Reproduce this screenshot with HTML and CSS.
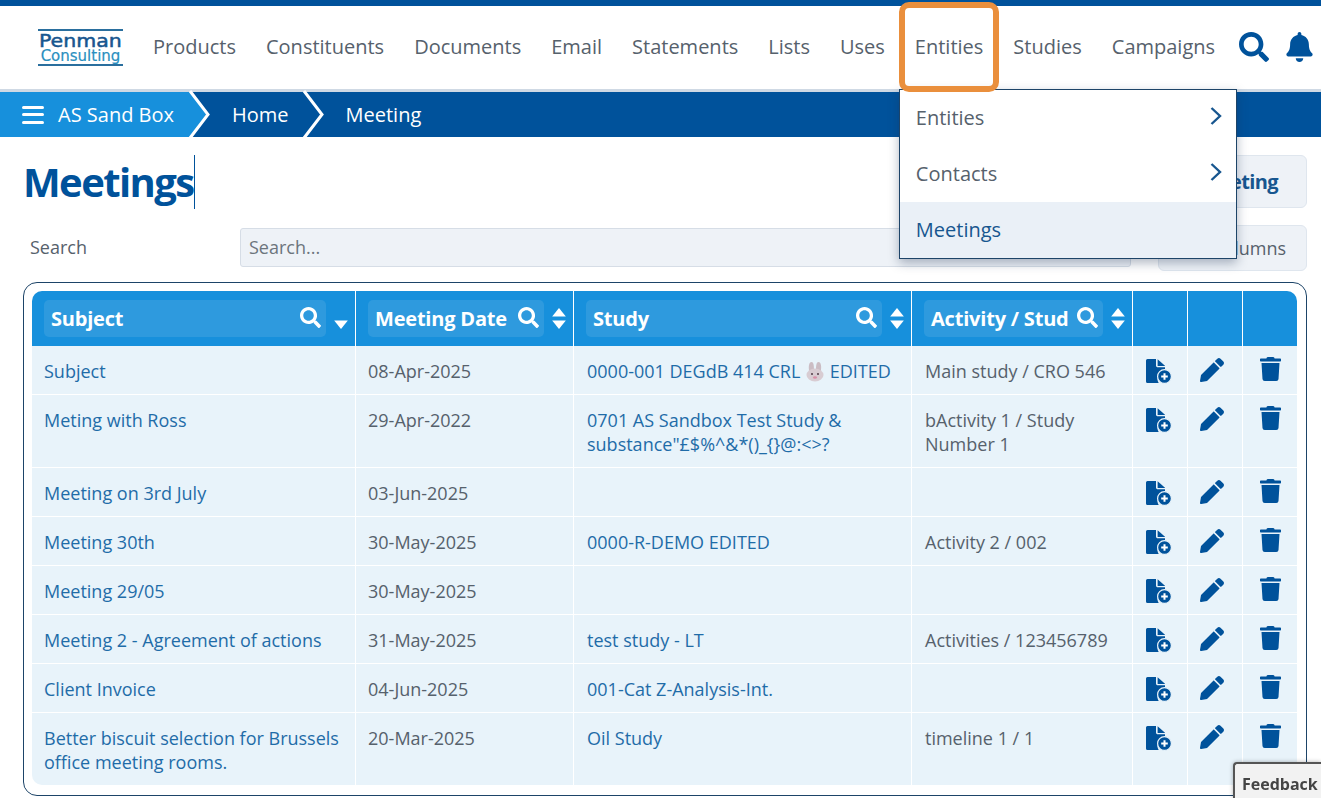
FILE: index.html
```html
<!DOCTYPE html>
<html lang="en">
<head>
<meta charset="utf-8">
<title>Meetings</title>
<link rel="stylesheet" href="styles.css">
</head>
<body>
<svg class="defs" width="0" height="0" aria-hidden="true">
  <symbol id="i-search" viewBox="0 0 512 512"><path d="M505 442.7L405.3 343c-4.5-4.5-10.6-7-17-7H372c27.6-35.3 44-79.7 44-128C416 93.1 322.9 0 208 0S0 93.1 0 208s93.1 208 208 208c48.3 0 92.7-16.4 128-44v16.3c0 6.4 2.5 12.5 7 17l99.7 99.7c9.4 9.4 24.6 9.4 33.9 0l28.3-28.3c9.4-9.4 9.4-24.6.1-34zM208 336c-70.7 0-128-57.2-128-128 0-70.7 57.2-128 128-128 70.7 0 128 57.2 128 128 0 70.7-57.2 128-128 128z"/></symbol>
  <symbol id="i-bell" viewBox="0 0 448 512"><path d="M224 512c35.32 0 63.97-28.65 63.97-64H160.03c0 35.35 28.65 64 63.97 64zm215.39-149.71c-19.32-20.76-55.47-51.99-55.47-154.29 0-77.7-54.48-139.9-127.94-155.16V32c0-17.67-14.32-32-31.98-32s-31.98 14.33-31.98 32v20.84C118.56 68.1 64.08 130.3 64.08 208c0 102.3-36.15 133.53-55.47 154.29-6 6.45-8.66 14.16-8.61 21.71.11 16.4 12.98 32 32.1 32h383.8c19.12 0 32-15.6 32.1-32 .05-7.55-2.61-15.27-8.61-21.71z"/></symbol>
  <symbol id="i-trash" viewBox="0 0 448 512"><path d="M432 32H312l-9.4-18.7A24 24 0 0 0 281.1 0H166.8a23.72 23.72 0 0 0-21.4 13.3L136 32H16A16 16 0 0 0 0 48v32a16 16 0 0 0 16 16h416a16 16 0 0 0 16-16V48a16 16 0 0 0-16-16zM53.2 467a48 48 0 0 0 47.9 45h245.8a48 48 0 0 0 47.9-45L416 128H32z"/></symbol>
  <symbol id="i-pencil" viewBox="0 0 512 512"><path d="M497.9 142.1l-46.1 46.1c-4.7 4.7-12.3 4.7-17 0l-111-111c-4.7-4.7-4.7-12.3 0-17l46.1-46.1c18.7-18.7 49.1-18.7 67.9 0l60.1 60.1c18.8 18.7 18.8 49.1 0 67.9zM284.2 99.8L21.6 362.4.4 483.9c-2.9 16.4 11.4 30.6 27.8 27.8l121.5-21.3 262.6-262.6c4.7-4.7 4.7-12.3 0-17l-111-111c-4.8-4.7-12.4-4.7-17.1 0z"/></symbol>
  <symbol id="i-file" viewBox="0 0 27 25"><path d="M2.500 0H11v6.500c0 1 .8 1.800 1.800 1.800H20v4a7.600 7.600 0 0 0-6.300 11.700H2.500A1.500 1.500 0 0 1 1 22.500V1.500A1.500 1.500 0 0 1 2.500 0z"/><path d="M12.600 0.300L20 6.700v.3h-7.400z"/><circle class="badge" cx="19.500" cy="17.500" r="6.900"/><path class="plus" d="M19.500 14.200v6.600M16.200 17.500h6.600"/></symbol>
  <symbol id="i-sort" viewBox="0 0 14 20"><path d="M7 0l6.500 8.200H.5z"/><path d="M7 20L.5 11.800h13z"/></symbol>
  <symbol id="i-down" viewBox="0 0 14 20"><path d="M7 20L.5 11.800h13z"/></symbol>
</svg>

<div class="topline"></div>

<header class="nav">
  <div class="logo">
    <span class="logo-top">Penman</span>
    <span class="logo-bot">Consulting</span>
  </div>
  <nav class="menu">
    <a class="menu-item">Products</a>
    <a class="menu-item">Constituents</a>
    <a class="menu-item">Documents</a>
    <a class="menu-item">Email</a>
    <a class="menu-item">Statements</a>
    <a class="menu-item">Lists</a>
    <a class="menu-item">Uses</a>
    <div class="menu-item menu-open">
      Entities
      <div class="dropdown">
        <div class="drop-row">Entities<svg class="chev" viewBox="0 0 12 18"><path d="M1.500 1L10 9L1.500 17"/></svg></div>
        <div class="drop-row">Contacts<svg class="chev" viewBox="0 0 12 18"><path d="M1.500 1L10 9L1.500 17"/></svg></div>
        <div class="drop-row drop-active">Meetings</div>
      </div>
    </div>
    <a class="menu-item">Studies</a>
    <a class="menu-item">Campaigns</a>
  </nav>
  <svg class="nav-search"><use href="#i-search"/></svg>
  <svg class="nav-bell"><use href="#i-bell"/></svg>
</header>

<div class="crumbs">
  <div class="crumb crumb-first">
    <span class="burger"><i></i><i></i><i></i></span>
    AS Sand Box
  </div>
  <svg class="crumb-sep" viewBox="0 0 20 45"><path class="sep-fill" d="M0 0L18 22.500L0 45z"/><path class="sep-line" d="M0-1L18 22.500L0 46"/></svg>
  <div class="crumb">Home</div>
  <svg class="crumb-sep" viewBox="0 0 20 45"><path class="sep-line" d="M0-1L18 22.500L0 46"/></svg>
  <div class="crumb">Meeting</div>
</div>

<main class="page">
  <div class="title-row">
    <h1 class="title"><span class="title-text">Meetings</span></h1>
    <button class="btn btn-add">Add Meeting</button>
  </div>
  <div class="search-row">
    <label class="search-label">Search</label>
    <div class="search-input">Search...</div>
    <button class="btn btn-cols">Columns</button>
  </div>

  <section class="panel">
    <div class="table-clip">
    <table class="grid">
      <colgroup>
        <col class="c1"><col class="c2"><col class="c3"><col class="c4"><col class="c5"><col class="c5"><col class="c6">
      </colgroup>
      <thead>
        <tr>
          <th><div class="th-wrap"><div class="th-box"><span class="th-text">Subject</span><svg class="th-search"><use href="#i-search"/></svg></div><svg class="th-sort"><use href="#i-down"/></svg></div></th>
          <th><div class="th-wrap"><div class="th-box"><span class="th-text">Meeting Date</span><svg class="th-search"><use href="#i-search"/></svg></div><svg class="th-sort"><use href="#i-sort"/></svg></div></th>
          <th><div class="th-wrap"><div class="th-box"><span class="th-text">Study</span><svg class="th-search"><use href="#i-search"/></svg></div><svg class="th-sort"><use href="#i-sort"/></svg></div></th>
          <th><div class="th-wrap"><div class="th-box"><span class="th-text">Activity / Stud</span><svg class="th-search"><use href="#i-search"/></svg></div><svg class="th-sort"><use href="#i-sort"/></svg></div></th>
          <th></th><th></th><th></th>
        </tr>
      </thead>
      <tbody>
        <tr>
          <td><a class="lnk">Subject</a></td><td>08-Apr-2025</td>
          <td><a class="lnk">0000-001 DEGdB 414 CRL <svg class="bunny" viewBox="0 0 20 20"><path class="b-ear" d="M4.500 10C3 5 4 0 6.500 0S9 5 9 9zM15.500 10c1.500-5 .5-10-2-10S11 5 11 9z"/><ellipse class="b-head" cx="10" cy="13" rx="8.500" ry="6.500"/><circle class="b-eye" cx="7" cy="12" r="1.100"/><circle class="b-eye" cx="13" cy="12" r="1.100"/><ellipse class="b-nose" cx="10" cy="15.500" rx="2" ry="1.300"/></svg> EDITED</a></td>
          <td>Main study / CRO 546</td>
          <td class="ic"><svg class="i-file"><use href="#i-file"/></svg></td><td class="ic"><svg class="i-pencil"><use href="#i-pencil"/></svg></td><td class="ic"><svg class="i-trash"><use href="#i-trash"/></svg></td>
        </tr>
        <tr>
          <td><a class="lnk">Meting with Ross</a></td><td>29-Apr-2022</td>
          <td><a class="lnk">0701 AS Sandbox Test Study &amp; substance"£$%^&amp;*()_{}@:&lt;&gt;?</a></td>
          <td>bActivity 1 / Study Number 1</td>
          <td class="ic"><svg class="i-file"><use href="#i-file"/></svg></td><td class="ic"><svg class="i-pencil"><use href="#i-pencil"/></svg></td><td class="ic"><svg class="i-trash"><use href="#i-trash"/></svg></td>
        </tr>
        <tr>
          <td><a class="lnk">Meeting on 3rd July</a></td><td>03-Jun-2025</td><td></td><td></td>
          <td class="ic"><svg class="i-file"><use href="#i-file"/></svg></td><td class="ic"><svg class="i-pencil"><use href="#i-pencil"/></svg></td><td class="ic"><svg class="i-trash"><use href="#i-trash"/></svg></td>
        </tr>
        <tr>
          <td><a class="lnk">Meeting 30th</a></td><td>30-May-2025</td><td><a class="lnk">0000-R-DEMO EDITED</a></td><td>Activity 2 / 002</td>
          <td class="ic"><svg class="i-file"><use href="#i-file"/></svg></td><td class="ic"><svg class="i-pencil"><use href="#i-pencil"/></svg></td><td class="ic"><svg class="i-trash"><use href="#i-trash"/></svg></td>
        </tr>
        <tr>
          <td><a class="lnk">Meeting 29/05</a></td><td>30-May-2025</td><td></td><td></td>
          <td class="ic"><svg class="i-file"><use href="#i-file"/></svg></td><td class="ic"><svg class="i-pencil"><use href="#i-pencil"/></svg></td><td class="ic"><svg class="i-trash"><use href="#i-trash"/></svg></td>
        </tr>
        <tr>
          <td><a class="lnk">Meeting 2 - Agreement of actions</a></td><td>31-May-2025</td><td><a class="lnk">test study - LT</a></td><td>Activities / 123456789</td>
          <td class="ic"><svg class="i-file"><use href="#i-file"/></svg></td><td class="ic"><svg class="i-pencil"><use href="#i-pencil"/></svg></td><td class="ic"><svg class="i-trash"><use href="#i-trash"/></svg></td>
        </tr>
        <tr>
          <td><a class="lnk">Client Invoice</a></td><td>04-Jun-2025</td><td><a class="lnk">001-Cat Z-Analysis-Int.</a></td><td></td>
          <td class="ic"><svg class="i-file"><use href="#i-file"/></svg></td><td class="ic"><svg class="i-pencil"><use href="#i-pencil"/></svg></td><td class="ic"><svg class="i-trash"><use href="#i-trash"/></svg></td>
        </tr>
        <tr>
          <td><a class="lnk">Better biscuit selection for Brussels office meeting rooms.</a></td><td>20-Mar-2025</td><td><a class="lnk">Oil Study</a></td><td>timeline 1 / 1</td>
          <td class="ic"><svg class="i-file"><use href="#i-file"/></svg></td><td class="ic"><svg class="i-pencil"><use href="#i-pencil"/></svg></td><td class="ic"><svg class="i-trash"><use href="#i-trash"/></svg></td>
        </tr>
      </tbody>
    </table>
    </div>
  </section>
</main>

<div class="feedback">Feedback</div>
</body>
</html>
```

FILE: styles.css
```css
* { box-sizing: border-box; }
html, body { margin: 0; padding: 0; height: 100%; overflow: hidden; }
body { font-family: "Open Sans", "Noto Sans", sans-serif; font-size: 18px; line-height: 24px; color: #56616c; background: #fff; }
.defs { position: absolute; }

.topline { height: 6px; background: #00529b; }

.nav { height: 86px; display: flex; align-items: center; padding: 0 8px 2px 38px; border-bottom: 3px solid #cfd9e4; background: #fff; }
.logo { width: 85px; height: 37px; margin-top: 1px; display: flex; flex-direction: column; align-items: center; justify-content: center; border-top: 2px solid #2a6f9e; border-bottom: 2px solid #2a6f9e; flex: none; overflow: hidden; }
.logo-top { font-family: "DejaVu Sans", sans-serif; font-size: 18px; line-height: 17px; color: #17568f; -webkit-text-stroke: .5px #17568f; transform: scaleX(1.14); }
.logo-bot { font-family: "DejaVu Sans", sans-serif; font-size: 15px; line-height: 14px; color: #2a8fc0; -webkit-text-stroke: .2px #2a8fc0; }

.menu { display: flex; align-items: center; margin-left: 30px; gap: 30px; flex: none; }
.menu-item { font-size: 20px; line-height: 28px; color: #56616c; white-space: nowrap; position: relative; }
.menu-open::before { content: ""; position: absolute; left: -16px; right: -16px; top: -31px; bottom: -31px; border: 6px solid #ea8f3c; border-radius: 10px; z-index: 6; pointer-events: none; }
.dropdown { position: absolute; left: -16px; top: 56px; width: 338px; background: #fff; border: 1px solid #1d4468; box-shadow: 0 4px 10px rgba(30,50,80,.35); z-index: 5; }
.drop-row { height: 56px; display: flex; align-items: center; justify-content: space-between; padding: 0 14px 0 16px; font-size: 20px; color: #56616c; }
.drop-active { background: #eaf0f7; color: #17568f; }
.chev { width: 12px; height: 18px; fill: none; stroke: #17568f; stroke-width: 2.400; margin-top: -3px; }

.nav-search { width: 30px; height: 30px; fill: #00529b; margin-left: 24px; flex: none; }
.nav-bell { width: 27px; height: 30px; fill: #00529b; margin-left: 17px; flex: none; }

.crumbs { height: 45px; display: flex; align-items: center; background: #00529b; color: #fff; font-size: 20px; }
.crumb { height: 45px; display: flex; align-items: center; padding: 0 15px 0 18px; white-space: nowrap; }
.crumb-first { width: 190px; background: #1790dc; padding: 0 0 0 22px; gap: 14px; }
.burger { display: flex; flex-direction: column; justify-content: space-between; width: 22px; height: 18px; }
.burger i { display: block; height: 3px; background: #fff; border-radius: 2px; }
.crumb-sep { width: 20px; height: 45px; flex: none; overflow: visible; margin-right: 4px; }
.sep-fill { fill: #1790dc; }
.sep-line { fill: none; stroke: #fff; stroke-width: 3; }

.page { padding: 18px 14px 0 23px; }
.title-row { display: flex; justify-content: space-between; align-items: center; height: 53px; }
.title { margin: 0; font-size: 40px; line-height: 54px; font-weight: 700; color: #00529b; letter-spacing: -1.600px; }
.title-text { display: inline-block; border-right: 1px solid #00529b; height: 54px; }
.btn { font-family: inherit; font-size: 18px; background: #eef2f7; border: 1px solid #dfe6ee; border-radius: 6px; color: #17568f; }
.btn-add { width: 200px; height: 53px; font-weight: 700; font-size: 20px; letter-spacing: -.6px; text-align: right; padding: 0 28px 0 0; }
.search-row { display: flex; align-items: center; height: 46px; margin-top: 17px; }
.search-label { width: 217px; padding-left: 7px; margin-top: -2px; color: #56616c; }
.search-input { width: 891px; height: 39px; margin-top: -2px; padding: 0 8px; display: flex; align-items: center; background: #eef2f7; border: 1px solid #d6dde6; border-radius: 3px; color: #6c757d; }
.btn-cols { width: 149px; height: 46px; margin-left: 27px; text-align: right; padding: 0 20px 0 0; color: #56616c; }

.panel { margin-top: 11px; height: 514px; border: 1px solid #1d4468; border-radius: 14px; padding: 8px 9px 0 8px; }
.table-clip { border-radius: 10px; overflow: hidden; }
.grid { width: 1265px; table-layout: fixed; border-collapse: separate; border-spacing: 0; }
.c1 { width: 324px; } .c2 { width: 218px; } .c3 { width: 338px; } .c4 { width: 221px; } .c5 { width: 55px; } .c6 { width: 54px; }

.grid th { height: 55px; padding: 0; background: #1790dc; border-right: 1px solid #fff; }
.grid th:last-child { border-right: 0; }
.th-wrap { display: flex; align-items: center; padding: 0 6px 0 12px; gap: 7px; }
.th-box { flex: none; width: calc(100% - 23px); height: 37px; display: flex; align-items: center; gap: 6px; padding: 0 5px 0 7px; background: #2e9ade; border-radius: 5px; }
.th-text { flex: 1; min-width: 0; white-space: nowrap; text-align: left; color: #fff; font-size: 20px; font-weight: 700; letter-spacing: -.2px; }
.th-search { width: 21px; height: 21px; fill: #fff; flex: none; margin-top: -2px; }
.th-sort { width: 16px; height: 21px; fill: #fff; flex: none; }

.grid td { padding: 13px 12px 11px 13px; vertical-align: top; background: #e8f3fa; border-right: 1px solid #fff; border-bottom: 1px solid #fff; overflow-wrap: anywhere; }
.grid td:first-child, .grid td:nth-child(2) { padding-left: 12px; }
.grid td:last-child { border-right: 0; }
.grid tr:last-child td { border-bottom: 0; }
.grid td.ic { padding: 0; text-align: center; }
.lnk { color: #1f6ca8; }
.bunny { width: 20px; height: 20px; vertical-align: -4px; }
.b-ear { fill: #cbbdc4; }
.b-head { fill: #d8ccd2; }
.b-eye { fill: #5a4650; }
.b-nose { fill: #d98fa8; }

.i-file { width: 27px; height: 25px; fill: #00529b; margin: 13px 3px 0 0; display: inline-block; }
.plus { fill: none; stroke: #fff; stroke-width: 2; }
.badge { stroke: #e8f3fa; stroke-width: 1.200; }
.i-pencil { width: 24px; height: 24px; fill: #00529b; margin: 12px 6px 0 0; display: inline-block; }
.i-trash { width: 21px; height: 24px; fill: #00529b; margin-top: 11px; display: inline-block; }

.feedback { position: fixed; right: 0; bottom: 0; width: 88px; height: 36px; padding: 8px 0 0 7px; background: #f2f2f2; border-top: 2px solid #555; border-left: 2px solid #555; border-top-left-radius: 4px; font-size: 16px; line-height: 24px; font-weight: 700; color: #444; box-shadow: 0 0 4px rgba(0,0,0,.3); }
```
